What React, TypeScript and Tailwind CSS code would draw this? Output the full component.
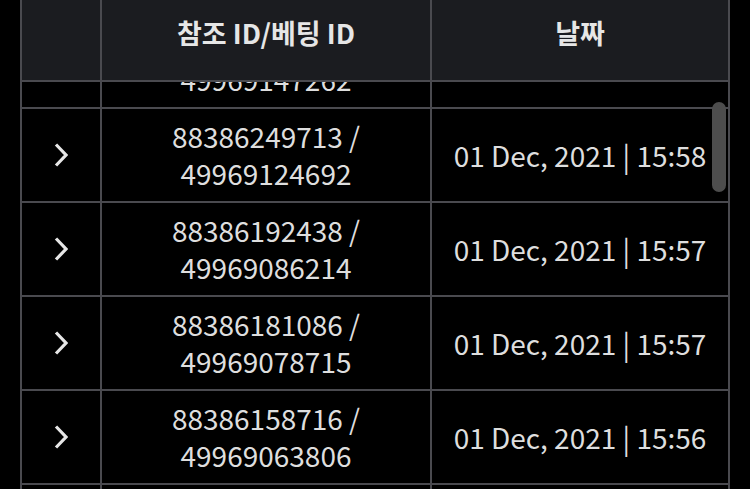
const ROWS = [
  { ref: '88386169501', bet: '49969147262', date: '01 Dec, 2021 | 15:58' },
  { ref: '88386249713', bet: '49969124692', date: '01 Dec, 2021 | 15:58' },
  { ref: '88386192438', bet: '49969086214', date: '01 Dec, 2021 | 15:57' },
  { ref: '88386181086', bet: '49969078715', date: '01 Dec, 2021 | 15:57' },
  { ref: '88386158716', bet: '49969063806', date: '01 Dec, 2021 | 15:56' },
  { ref: '88386140271', bet: '49969050118', date: '01 Dec, 2021 | 15:56' }
];

const font = { fontFamily: '"Noto Sans CJK KR", "Noto Sans", sans-serif' };

function Chevron() {
  return (
    <svg width="14" height="24" viewBox="0 0 14 24" fill="none">
      <polyline points="2,1.5 12,12 2,22.5" stroke="#e6e6e6" strokeWidth="3.2" />
    </svg>
  );
}

export default function App() {
  return (
    <div className="h-[489px] w-[750px] overflow-hidden bg-black" style={font}>
      <div className="mx-[20px] flex h-full flex-col border-x-2 border-[#4a4a4f]">
        {/* 헤더 */}
        <div className="grid h-[82px] shrink-0 grid-cols-[80px_330px_1fr] border-b-2 border-[#4a4a4f] bg-[#1b1c20] text-[27px] font-bold leading-[36px] text-[#e6e6e6]">
          <div className="border-r-2 border-[#4a4a4f]" />
          <div className="flex items-center justify-center border-r-2 border-[#4a4a4f] pb-[14px]">
            참조 ID/베팅 ID
          </div>
          <div className="flex items-center justify-center pb-[14px]">날짜</div>
        </div>

        <div className="relative min-h-0 flex-1 overflow-hidden">
          <div className="-mt-[67px]">
            {ROWS.map((r, i) => (
              <div
                key={i}
                className="grid h-[94px] grid-cols-[80px_330px_1fr] border-b-2 border-[#4a4a4f] text-[28px] text-[#dedede]"
              >
                <div className="flex items-center justify-center border-r-2 border-[#4a4a4f]">
                  <Chevron />
                </div>
                <div className="flex flex-col items-center justify-center border-r-2 border-[#4a4a4f] leading-[37px]">
                  <span>{r.ref} /</span>
                  <span>{r.bet}</span>
                </div>
                <div className="flex items-center justify-center">{r.date}</div>
              </div>
            ))}
          </div>
          {/* 스크롤바 */}
          <div className="absolute right-[2px] top-[20px] h-[90px] w-[14px] rounded-full bg-[#4d4d4d]" />
        </div>
      </div>
    </div>
  );
}
